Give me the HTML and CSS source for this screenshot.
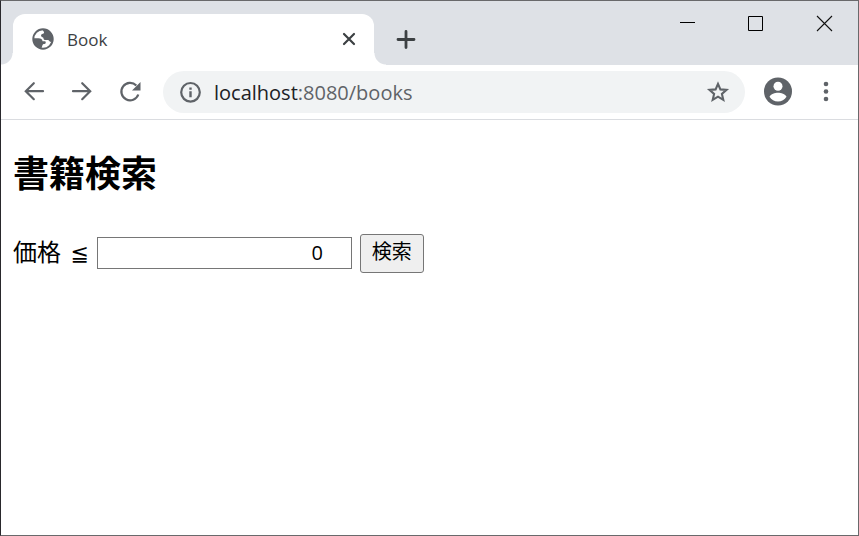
FILE: index.html
```html
<!DOCTYPE html>
<html lang="ja">
<head>
<meta charset="utf-8">
<title>Book</title>
<link rel="stylesheet" href="styles.css">
</head>
<body>
<div class="window">
  <header class="tab-strip">
    <div class="tab">
      <svg class="globe" viewBox="0 0 22 22" aria-hidden="true">
        <circle cx="11" cy="11" r="9.7" fill="#fff" stroke="#5f6368" stroke-width="2"/>
        <path fill="#5f6368" d="M10 1.200a10 10 0 0 1 10.800 11.800c-1 1.200-2.300 1.300-3.300.300-.6-.6-.8-1.200-1.700-1.200h-2.300c-1.300 0-2.100-.9-2.100-2.100 0-1.100-1.900-.8-2.300-2.100-.3-1.200.5-2 1.900-2.200.9-.1 1.200-.7 1-1.600z"/>
        <path fill="#5f6368" d="M1.200 10.200h5.300c2.300 0 4 1.300 4 3h2.400c1 0 1.300 1.900.2 2.600-.8.500-2 .1-2.400 1-.5 1-.7 2.400-1.500 3.900A10 10 0 0 1 1.200 10.200z"/>
      </svg>
      <span class="tab-title">Book</span>
      <button class="icon-button tab-close" type="button" aria-label="Close tab">
        <svg width="14" height="14" viewBox="0 0 14 14"><path d="M2 2l10 10M12 2L2 12" stroke="#3c4043" stroke-width="2.200" stroke-linecap="round"/></svg>
      </button>
    </div>
    <button class="icon-button new-tab" type="button" aria-label="New tab">
      <svg width="20" height="20" viewBox="0 0 20 20"><path d="M10 1.500v16M2 9.500h16" stroke="#3c4043" stroke-width="2.800" stroke-linecap="round"/></svg>
    </button>
    <div class="window-controls">
      <button class="icon-button" type="button" aria-label="Minimize">
        <svg width="15" height="15" viewBox="0 0 15 15"><path d="M1 6.500h15" stroke="#000"/></svg>
      </button>
      <button class="icon-button" type="button" aria-label="Maximize">
        <svg width="15" height="15" viewBox="0 0 15 15"><path d="M.5.5h14v14H.5z" fill="none" stroke="#000"/></svg>
      </button>
      <button class="icon-button" type="button" aria-label="Close">
        <svg width="15" height="15" viewBox="0 0 15 15"><path d="M0 0l15 15M15 0L0 15" stroke="#111" stroke-width="1.100"/></svg>
      </button>
    </div>
  </header>

  <nav class="toolbar">
    <button class="icon-button" type="button" aria-label="Back">
      <svg width="24" height="24" viewBox="0 0 24 24"><path d="M21 11.200H4M11.800 3.200l-8 8 8 8" fill="none" stroke="#5f6368" stroke-width="2.200" stroke-linecap="round"/></svg>
    </button>
    <button class="icon-button" type="button" aria-label="Forward">
      <svg width="24" height="24" viewBox="0 0 24 24"><path d="M3 11.200h17M12.200 3.200l8 8-8 8" fill="none" stroke="#5f6368" stroke-width="2.200" stroke-linecap="round"/></svg>
    </button>
    <button class="icon-button" type="button" aria-label="Reload">
      <svg width="24" height="24" viewBox="0 0 24 24"><path d="M20.300 14.500A8.700 8.700 0 1 1 18.300 5.500" fill="none" stroke="#5f6368" stroke-width="2.200"/><path d="M22.500 2V10.500h-8.500z" fill="#5f6368"/></svg>
    </button>
    <div class="address-bar">
      <svg width="22" height="22" viewBox="0 0 22 22" aria-hidden="true"><circle cx="10.500" cy="11.300" r="9.300" fill="none" stroke="#5f6368" stroke-width="2.200"/><path d="M9.300 10.200h2.400v6H9.300zM9.300 6.500h2.400v2.200H9.300z" fill="#5f6368"/></svg>
      <div class="address" role="textbox" aria-label="Address"><span class="host">localhost</span>:8080/books</div>
      <button class="icon-button" type="button" aria-label="Bookmark">
        <svg width="24" height="24" viewBox="0 0 24 24"><path d="M12 3.800l2.400 5.600 6.100.5-4.600 4 1.400 5.900L12 16.700l-5.300 3.100 1.400-5.900-4.600-4 6.100-.5z" fill="none" stroke="#5f6368" stroke-width="2.100"/></svg>
      </button>
    </div>
    <button class="icon-button profile" type="button" aria-label="Profile">
      <svg width="28" height="28" viewBox="0 0 28 28"><circle cx="14" cy="13.500" r="14" fill="#5f6368"/><circle cx="14" cy="8.300" r="4.500" fill="#fff"/><path d="M5.500 18.700c1.200-2.600 5.500-4 8.500-4s7.300 1.400 8.500 4c-1.800 3-4.900 4.800-8.500 4.800s-6.700-1.800-8.500-4.800z" fill="#fff"/></svg>
    </button>
    <button class="icon-button menu" type="button" aria-label="Menu">
      <svg width="6" height="22" viewBox="0 0 6 22"><g fill="#5f6368"><circle cx="3" cy="3" r="2.300"/><circle cx="3" cy="10.500" r="2.300"/><circle cx="3" cy="18" r="2.300"/></g></svg>
    </button>
  </nav>

  <main class="page">
    <h1>書籍検索</h1>
    <form class="search">
      <label for="price">価格 <span class="operator">≦</span></label>
      <input id="price" type="number" value="0">
      <button class="submit" type="button">検索</button>
    </form>
  </main>
</div>
</body>
</html>
```

FILE: styles.css
```css
* {
  box-sizing: border-box;
}

body {
  margin: 0;
  font-family: "Open Sans", "Noto Sans CJK JP", sans-serif;
  background: #fff;
}

svg {
  display: block;
  flex: none;
  overflow: visible;
}

.window {
  display: flex;
  flex-direction: column;
  min-height: 100vh;
  border: 1px solid #69696b;
  border-left-color: #29282c;
}

.icon-button {
  display: flex;
  flex: none;
  padding: 0;
  border: 0;
  background: none;
}

.tab-strip {
  display: flex;
  align-items: stretch;
  height: 64px;
  padding: 13px 0 0 12px;
  background: #dee1e6;
}

.tab {
  position: relative;
  display: flex;
  align-items: center;
  flex: 0 1 361px;
  padding: 0 18px 1px 19px;
  border-radius: 12px 12px 0 0;
  background: #fff;
}

/* Curved feet joining the tab to the toolbar */
.tab::before,
.tab::after {
  content: "";
  position: absolute;
  bottom: 0;
  width: 12px;
  height: 12px;
}

.tab::before {
  right: 100%;
  background: radial-gradient(circle at 0 0, #dee1e6 11px, #fff 12px);
}

.tab::after {
  left: 100%;
  background: radial-gradient(circle at 100% 0, #dee1e6 11px, #fff 12px);
}

.globe {
  width: 22px;
  height: 22px;
}

.tab-title {
  flex: 1;
  margin-left: 13px;
  padding-top: 2px;
  font-size: 17px;
  line-height: 24px;
  color: #3c4043;
}

.new-tab {
  align-items: center;
  margin-left: 22px;
}

.window-controls {
  display: flex;
  gap: 54px;
  margin: 2px 26px 0 auto;
}

.toolbar {
  display: flex;
  align-items: center;
  gap: 24px;
  height: 55px;
  padding: 0 29px 0 21px;
  border-bottom: 1px solid #dadce0;
}

.address-bar {
  display: flex;
  align-items: center;
  flex: 1;
  height: 42px;
  margin-right: -5px;
  margin-left: -3px;
  padding: 0 15px 0 17px;
  border-radius: 21px;
  background: #f1f3f4;
}

.address {
  flex: 1;
  margin-left: 12px;
  padding-top: 2px;
  font-size: 20px;
  line-height: 28px;
  color: #5f6368;
}

.host {
  color: #202124;
}

.menu {
  margin-left: 7px;
}

.page {
  flex: 1;
  padding: 24px 12px;
  font-family: "Noto Sans CJK JP", sans-serif;
  color: #000;
}

h1 {
  margin: 0;
  font-size: 36px;
  line-height: 54px;
}

.search {
  display: flex;
  align-items: center;
  gap: 8px;
  margin-top: 36px;
}

.search label {
  padding-bottom: 6px;
  font-size: 24px;
  line-height: 33px;
}

.operator {
  margin-left: 4px;
  font-family: "DejaVu Sans", sans-serif;
  font-size: 22px;
  line-height: 1;
}

.search input {
  width: 255px;
  height: 32px;
  margin-bottom: 1px;
  padding: 0 28px 2px 2px;
  border: 1px solid #767676;
  border-radius: 0;
  font-family: "Open Sans", sans-serif;
  font-size: 20px;
  text-align: right;
  appearance: textfield;
}

.search input::-webkit-inner-spin-button {
  display: none;
}

.submit {
  height: 39px;
  padding: 0 11px 6px;
  border: 1px solid #767676;
  border-radius: 3px;
  background: #efefef;
  font-family: "Noto Sans CJK JP", sans-serif;
  font-size: 20px;
  color: #000;
}
```
